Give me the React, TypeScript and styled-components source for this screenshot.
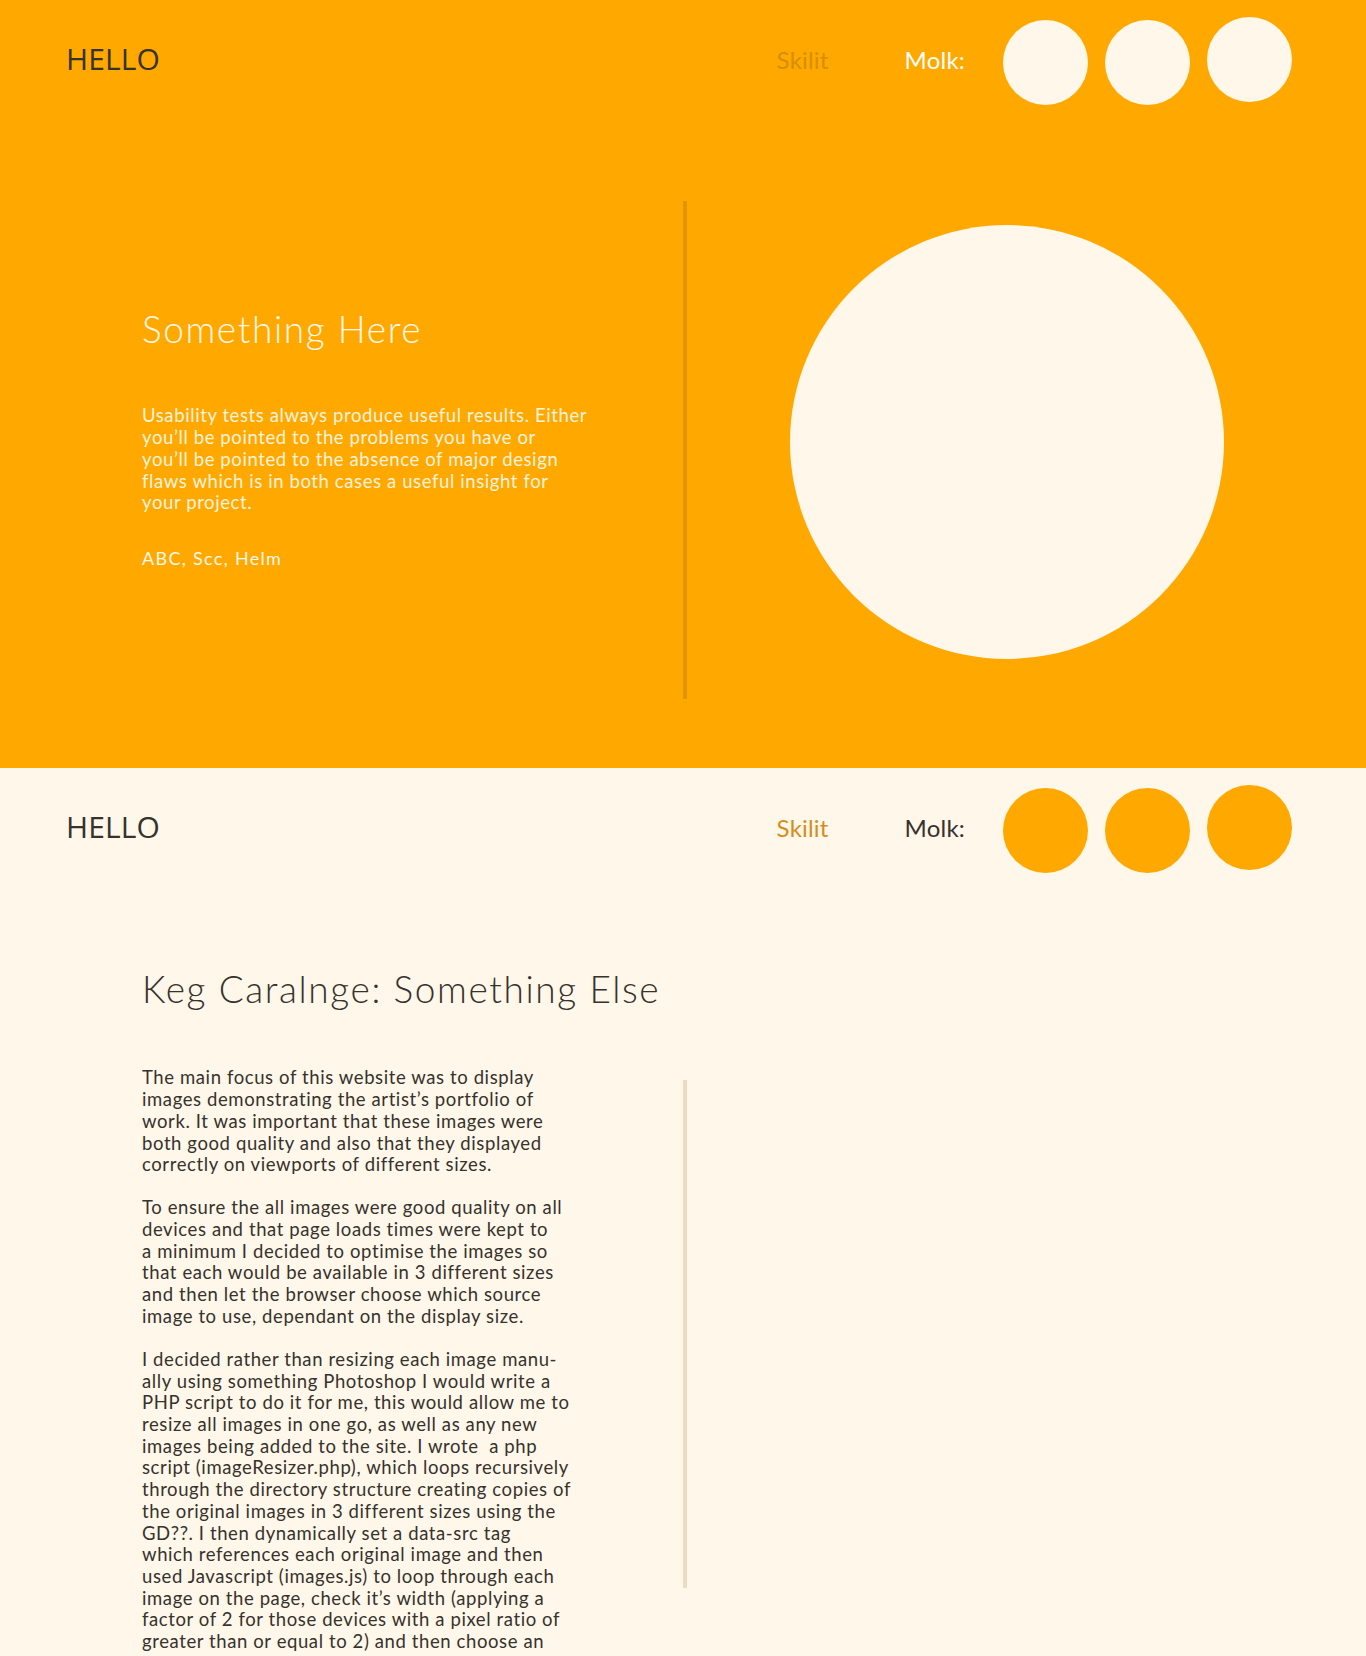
import React from 'react';
import styled, { createGlobalStyle, css } from 'styled-components';

type Tone = 'orange' | 'cream';

const palette = {
    orange: '#ffa800',
    cream: '#fff7ea',
    ink: '#36322c',
};

// copy keeps the line breaks of the original layout
const intro = [
    'Usability tests always produce useful results. Either',
    'you’ll be pointed to the problems you have or',
    'you’ll be pointed to the absence of major design',
    'flaws which is in both cases a useful insight for',
    'your project.',
];

const story = [
    [
        'The main focus of this website was to display',
        'images demonstrating the artist’s portfolio of',
        'work. It was important that these images were',
        'both good quality and also that they displayed',
        'correctly on viewports of different sizes.',
    ],
    [
        'To ensure the all images were good quality on all',
        'devices and that page loads times were kept to',
        'a minimum I decided to optimise the images so',
        'that each would be available in 3 different sizes',
        'and then let the browser choose which source',
        'image to use, dependant on the display size.',
    ],
    [
        'I decided rather than resizing each image manu-',
        'ally using something Photoshop I would write a',
        'PHP script to do it for me, this would allow me to',
        'resize all images in one go, as well as any new',
        'images being added to the site. I wrote\u00a0 a php',
        'script (imageResizer.php), which loops recursively',
        'through the directory structure creating copies of',
        'the original images in 3 different sizes using the',
        'GD??. I then dynamically set a data-src tag',
        'which references each original image and then',
        'used Javascript (images.js) to loop through each',
        'image on the page, check it’s width (applying a',
        'factor of 2 for those devices with a pixel ratio of',
        'greater than or equal to 2) and then choose an',
        'appropriately sized image to use.',
    ],
];

const GlobalStyle = createGlobalStyle`
    html, body {
        margin: 0;
        padding: 0;
        background: ${palette.cream};
    }

    body {
        font-family: Lato, 'Open Sans', sans-serif;
        -webkit-font-smoothing: antialiased;
    }

    * {
        box-sizing: border-box;
    }
`;

const Section = styled.section<{ $tone: Tone }>`
    background: ${(p) => (p.$tone === 'orange' ? palette.orange : palette.cream)};
    color: ${(p) => (p.$tone === 'orange' ? '#fff8ec' : palette.ink)};
    min-height: ${(p) => (p.$tone === 'orange' ? '768px' : '0')};
`;

const Header = styled.header`
    display: flex;
    align-items: center;
    height: 124px;
    padding: 0 74px 0 66px;
`;

const Logo = styled.div`
    font-family: 'Open Sans', sans-serif;
    font-size: 30px;
    color: ${palette.ink};
    letter-spacing: 0.1px;
    margin-top: -8px;
`;

const Nav = styled.nav`
    margin-left: auto;
    display: flex;
    align-items: center;
`;

const NavLink = styled.a<{ $tone: Tone }>`
    font-size: 24px;
    margin-right: 76px;
    margin-top: -6px;
    text-decoration: none;
    letter-spacing: 0.2px;
    color: ${(p) => (p.$tone === 'orange' ? '#d58f00' : '#d48e1c')};
`;

const Label = styled.span<{ $tone: Tone }>`
    font-size: 24px;
    margin-right: 38px;
    margin-top: -6px;
    letter-spacing: 0.2px;
    color: ${(p) => (p.$tone === 'orange' ? '#ffffff' : palette.ink)};
`;

const Dots = styled.div`
    display: flex;
    align-items: center;
    gap: 17px;
`;

const Dot = styled.span<{ $tone: Tone; $raised?: boolean }>`
    display: block;
    width: 85px;
    height: 85px;
    border-radius: 50%;
    background: ${(p) => (p.$tone === 'orange' ? palette.cream : palette.orange)};
    ${(p) =>
        p.$raised &&
        css`
            margin-bottom: 6px;
        `}
`;

const Hero = styled.div`
    display: grid;
    grid-template-columns: 687px 1fr;
    margin-top: 77px;
`;

const HeroText = styled.div`
    height: 498px;
    border-right: 4px solid #e39500;
    padding: 106px 0 0 142px;
`;

const Title = styled.h1<{ $tone: Tone }>`
    margin: 0;
    font-weight: 300;
    font-size: 37px;
    line-height: 1.2;
    letter-spacing: 1.6px;
    color: ${(p) => (p.$tone === 'orange' ? '#fff8ec' : palette.ink)};
`;

const Body = styled.p<{ $tone: Tone }>`
    margin: 0 0 21.4px;
    white-space: pre-line;
    font-size: 18.5px;
    line-height: 21.7px;
    letter-spacing: 0.6px;
    color: ${(p) => (p.$tone === 'orange' ? '#fff3df' : palette.ink)};
`;

const Intro = styled.div`
    margin-top: 54px;
`;

const Credits = styled.div`
    margin-top: 33px;
    font-size: 18px;
    letter-spacing: 1.3px;
    color: #fff8ec;
`;

const HeroArt = styled.div`
    display: flex;
    justify-content: center;
    align-items: flex-start;
    padding: 24px 40px 0 0;
`;

const Disc = styled.div`
    width: 434px;
    height: 434px;
    border-radius: 50%;
    background: ${palette.cream};
`;

const Article = styled.article`
    padding: 75px 0 0 142px;
`;

const Columns = styled.div`
    display: grid;
    grid-template-columns: 683px 1fr;
    margin-top: 56px;
`;

const TextColumn = styled.div`
    padding-left: 142px;
`;

const Rule = styled.div`
    height: 508px;
    margin-top: 13px;
    border-left: 4px solid #e8dcc4;
`;

const SiteHeader = ({ tone }: { tone: Tone }) => (
    <Header>
        <Logo>HELLO</Logo>
        <Nav>
            <NavLink $tone={tone} href='#'>
                Skilit
            </NavLink>
            <Label $tone={tone}>Molk:</Label>
            <Dots>
                <Dot $tone={tone} />
                <Dot $tone={tone} />
                <Dot $tone={tone} $raised />
            </Dots>
        </Nav>
    </Header>
);

const App = () => {
    return (
        <>
            <GlobalStyle />
            <Section $tone='orange'>
                <SiteHeader tone='orange' />
                <Hero>
                    <HeroText>
                        <Title $tone='orange'>Something Here</Title>
                        <Intro>
                            <Body $tone='orange'>{intro.join('\n')}</Body>
                        </Intro>
                        <Credits>ABC, Scc, Helm</Credits>
                    </HeroText>
                    <HeroArt>
                        <Disc />
                    </HeroArt>
                </Hero>
            </Section>
            <Section $tone='cream'>
                <SiteHeader tone='cream' />
                <Article>
                    <Title $tone='cream'>Keg Caralnge: Something Else</Title>
                </Article>
                <Columns>
                    <TextColumn>
                        {story.map((lines, i) => (
                            <Body key={i} $tone='cream'>
                                {lines.join('\n')}
                            </Body>
                        ))}
                    </TextColumn>
                    <Rule />
                </Columns>
            </Section>
        </>
    );
};

export default App;
